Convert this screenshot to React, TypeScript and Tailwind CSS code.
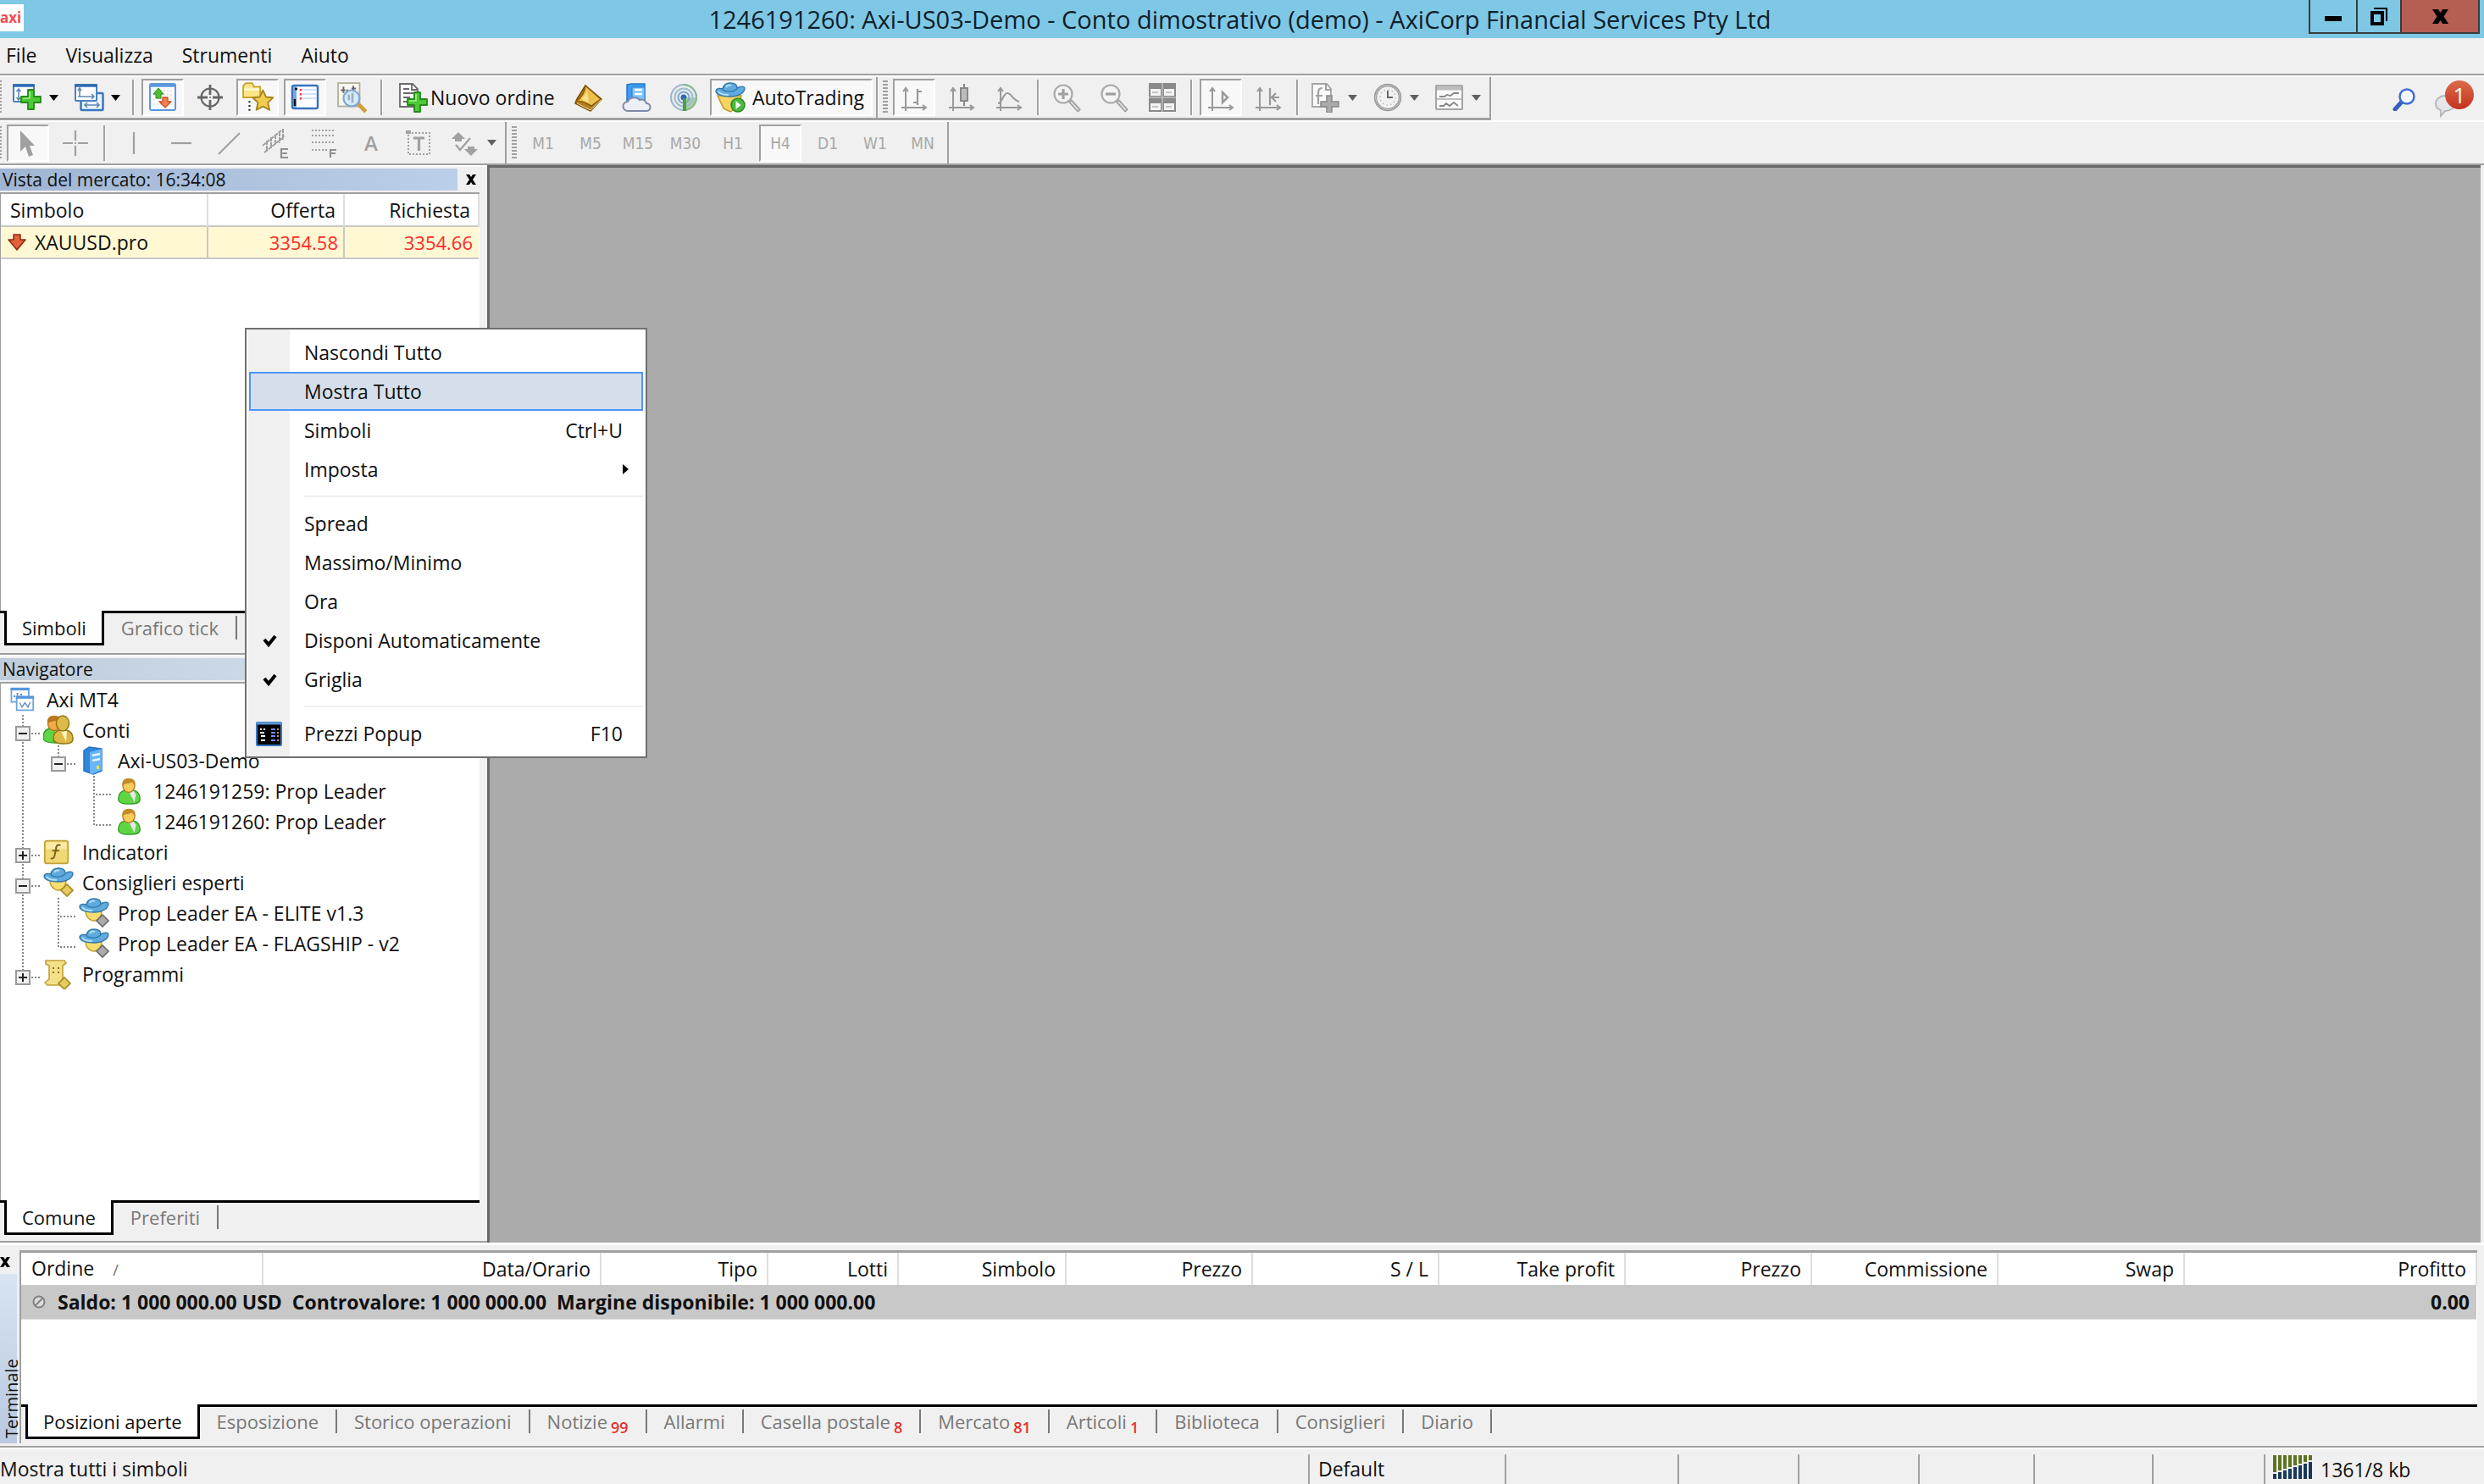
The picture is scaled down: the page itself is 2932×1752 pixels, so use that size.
import React, { useState } from 'react';

type IconProps = { size?: number; children: React.ReactNode };

function Icon({ size = 36, children }: IconProps) {
  return (
    <svg width={size} height={size} viewBox="0 0 36 36" fill="none" className="shrink-0" aria-hidden="true">
      {children}
    </svg>
  );
}

/* Toolbar icons */

function GreenPlus() {
  return (
    <>
      <path
        d="M19 9h7v8h8v7h-8v8h-7v-8h-8v-7h8z"
        fill="#4cc934"
        stroke="#238a1a"
        strokeWidth="1.8"
        strokeLinejoin="round"
      />
      <path d="M21 11v8h-8" stroke="#a5f08c" strokeWidth="1.6" />
    </>
  );
}

function NewChartIcon() {
  return (
    <Icon>
      <rect x="2" y="3" width="24" height="20" rx="1" fill="#fff" stroke="#4a80c0" strokeWidth="2" />
      <path d="M1 4h26" stroke="#2f6cb5" strokeWidth="3.5" />
      <path d="M8 9v11M5.5 11L8 8l2.5 3M5.5 18L8 21l2.5-3" stroke="#5f88b4" strokeWidth="1.6" />
      <GreenPlus />
    </Icon>
  );
}

function ProfilesIcon() {
  return (
    <Icon>
      <rect x="8.5" y="13" width="26" height="20" rx="1" fill="#eaf3fc" stroke="#3b76bd" strokeWidth="2.5" />
      <path d="M13 27h17M16 24l-3 3 3 3M27 24l3 3-3 3" stroke="#5f88b4" strokeWidth="1.6" />
      <rect x="2" y="3" width="25" height="19" rx="1" fill="#fff" stroke="#4a80c0" strokeWidth="2" />
      <path d="M1 4h27" stroke="#2f6cb5" strokeWidth="3.5" />
      <path d="M7 8v9M5 10l2-3 2 3M5 17h19M21 14l3 3-3 3" stroke="#5f88b4" strokeWidth="1.6" />
    </Icon>
  );
}

function MarketWatchIcon() {
  return (
    <Icon>
      <rect x="3" y="2" width="30" height="31" rx="2" fill="#fff" stroke="#5b98dc" strokeWidth="2" />
      <path d="M3 4h30" stroke="#5b98dc" strokeWidth="3.5" />
      <path d="M7 10h22M7 15h22M7 20h22M7 26h22" stroke="#dcdcdc" strokeWidth="1.5" strokeDasharray="2 2" />
      <path d="M13 7l6 7h-3v5h-6v-5H7z" fill="#4fbf38" stroke="#2a8a18" />
      <path d="M21 30l7-7h-4v-5h-6v5h-4z" fill="#f58055" stroke="#cc4f20" strokeWidth="1.3" />
    </Icon>
  );
}

function CrosshairIcon() {
  return (
    <Icon>
      <circle cx="18" cy="18" r="10.500" stroke="#666" strokeWidth="2.200" />
      <path d="M18 3v12M18 21v12M3 18h12M21 18h12" stroke="#666" strokeWidth="2.800" />
      <path d="M17 18h2" stroke="#888" strokeWidth="2" />
    </Icon>
  );
}

function NavigatorIcon() {
  return (
    <Icon size={38}>
      <path d="M2 18V5l3-3h7l2 4h7v12z" fill="#fbe588" stroke="#c7a22e" strokeWidth="1.8" />
      <path d="M3 9h17" stroke="#fffbe0" strokeWidth="2" />
      <path d="M9 22v12" stroke="#222" strokeWidth="2" strokeDasharray="2 2.500" />
      <path
        d="M24 10l3.500 7.500 8 .8-6 5.500 1.800 8.200-7.300-4-7.300 4 1.800-8.200-6-5.500 8-.8z"
        fill="#f0cf50"
        stroke="#a8821e"
        strokeWidth="1.800"
        strokeLinejoin="round"
      />
    </Icon>
  );
}

function TerminalIcon() {
  return (
    <Icon>
      <rect x="3" y="4" width="30" height="27" rx="2" fill="#fff" stroke="#3a74bc" strokeWidth="2.500" />
      <path d="M4 5h4v25H4z" fill="#7aa7dd" />
      <path d="M15 9h16M15 14h16M15 19h16" stroke="#c4daf5" strokeWidth="1.600" />
      <path d="M6 8h3M6 20v8" stroke="#111" strokeWidth="2.500" />
      <path d="M13 8v14" stroke="#e04050" strokeWidth="2.400" strokeDasharray="2.400 2.600" />
    </Icon>
  );
}

function TesterIcon() {
  return (
    <Icon size={38}>
      <rect x="2" y="2" width="24" height="26" fill="#f9f7f1" stroke="#b5b09c" strokeWidth="1.800" />
      <path d="M8 6v7M12 9v6M19 5v7M5 10h5M17 8h5" stroke="#666" strokeWidth="1.800" />
      <path d="M24 25l9 9" stroke="#cf9f3c" strokeWidth="4.500" />
      <circle cx="17" cy="19" r="9" fill="#d3e8fb" fillOpacity="0.9" stroke="#7ba6d4" strokeWidth="2" />
      <path d="M14 15v6M18 13v11" stroke="#9db1c4" strokeWidth="2.500" />
    </Icon>
  );
}

function NewOrderIcon() {
  return (
    <Icon>
      <path d="M2 2h15l6 6v21H2z" fill="#fff" stroke="#6a6a6a" strokeWidth="1.800" />
      <path d="M16 2v7h7" stroke="#6a6a6a" strokeWidth="1.800" />
      <path d="M6 8h7M6 13h12M6 18h8M6 23h7" stroke="#6a6a6a" strokeWidth="1.800" />
      <g transform="translate(0 3)">
        <GreenPlus />
      </g>
    </Icon>
  );
}

function BookIcon() {
  return (
    <Icon>
      <path d="M14 4L33 20 20 34 2 25l2-5z" fill="#b57e1c" stroke="#7a4c08" strokeWidth="1.600" strokeLinejoin="round" />
      <path d="M14 4l18 16-11 8C14 24 8 22 3 22c6-3 10-9 11-18z" fill="#ecc04a" stroke="#8b5a0c" strokeWidth="1.500" />
      <path d="M16 9c-1 5-4 8-7 11l9 4z" fill="#fdf0a8" opacity="0.7" />
      <path d="M4 25l16 8 12-12" stroke="#f2dc9c" />
    </Icon>
  );
}

function CloudIcon() {
  return (
    <Icon>
      <path d="M7 3l5-1h16v22H7z" fill="#3f9bf0" stroke="#2477cc" strokeWidth="1.500" />
      <path d="M13 6h15v18H13z" fill="#7cc4ff" stroke="#2a7cd4" />
      <path d="M16 9h9M16 14h9" stroke="#fff" strokeWidth="2.500" />
      <path
        d="M8 34a5.500 5.500 0 010-11 8 7 0 0114-2 6 6 0 018 4 4.500 4.500 0 010 9z"
        fill="#eceff6"
        stroke="#7c88a8"
        strokeWidth="2"
      />
    </Icon>
  );
}

function SignalIcon() {
  return (
    <Icon>
      <circle cx="18" cy="18" r="15" fill="#e6edea" stroke="#9ab3cf" strokeWidth="2" />
      <path d="M18 18h15A15 15 0 0118 34z" fill="#a5cfa0" />
      <path d="M18 3a15 15 0 010 30" stroke="#8ab790" strokeWidth="2" />
      <circle cx="18" cy="18" r="10.500" stroke="#a3bcd6" strokeWidth="2" />
      <circle cx="18" cy="18" r="6.500" stroke="#82a5cf" strokeWidth="2" />
      <circle cx="18" cy="18" r="3.500" fill="#2f66b5" />
      <path d="M19 19v15" stroke="#48a33c" strokeWidth="4" />
    </Icon>
  );
}

function ExpertHat() {
  return (
    <>
      <path
        d="M1 10c1-3 5-3 8-2 1-5 4-7 9-7s8 2 8 6c4-2 8-3 9 0 0 6-8 10-17 10S1 15 1 10z"
        fill="#5fabdf"
        stroke="#2f77a8"
        strokeWidth="1.400"
      />
      <path d="M9 9c4 3 12 3 17-1" stroke="#2f77a8" strokeWidth="1.400" />
      <path d="M13 6c1-2 3-3 6-2M4 11c2 3 8 4 12 4" stroke="#b4def8" strokeWidth="2" />
    </>
  );
}

function AutoTradingIcon() {
  return (
    <Icon>
      <path d="M3 16h28l-4 13-9 6-8-4z" fill="#f5d460" stroke="#c09828" strokeWidth="1.500" />
      <ExpertHat />
      <circle cx="27" cy="27" r="8" fill="#4cb83e" stroke="#2b8a24" strokeWidth="1.500" />
      <path d="M24.500 22v10l6-5z" fill="#fff" />
    </Icon>
  );
}

function Axes() {
  return <path d="M8 34V8M5 11l3-4 3 4M3 30h29M28 27l4 3-4 3" stroke="#999" strokeWidth="2" />;
}

function BarChartIcon() {
  return (
    <Icon>
      <Axes />
      <path d="M22 8v19M22 11h5M17 24h5" stroke="#999" strokeWidth="2.200" />
    </Icon>
  );
}

function CandlesIcon() {
  return (
    <Icon>
      <Axes />
      <path d="M21 2v26" stroke="#888" strokeWidth="2" />
      <rect x="17" y="7" width="8" height="15" fill="#bcbcbc" stroke="#888" strokeWidth="2" />
    </Icon>
  );
}

function LineChartIcon() {
  return (
    <Icon>
      <Axes />
      <path d="M5 25c5 0 6-12 11-12s6 8 14 10" stroke="#999" strokeWidth="2" />
    </Icon>
  );
}

function ZoomIcon({ plus }: { plus?: boolean }) {
  return (
    <Icon>
      <path d="M21 22l11 12" stroke="#999" strokeWidth="5" />
      <path d="M22 23l9 10" stroke="#dcdcdc" strokeWidth="2" />
      <circle cx="13" cy="14" r="10.500" fill="#f4f4f4" stroke="#aaa" strokeWidth="2.200" />
      <path d={plus ? 'M7 14h12M13 8v12' : 'M7 14h12'} stroke="#a0a0a0" strokeWidth="3.200" />
    </Icon>
  );
}

function TileIcon() {
  return (
    <Icon>
      <path d="M2 1h32v34H2z" fill="#8a8a8a" />
      <path d="M4 8h12v8H4zM20 8h12v8H20zM4 25h12v8H4zM20 25h12v8H20z" fill="#f4f4f4" />
      <path d="M18 1v34M2 18h32" stroke="#c0c0c0" strokeWidth="1.500" />
      <path d="M6 12h7M22 12h7M6 29h7M22 29h7" stroke="#c4c4c4" strokeWidth="2" />
    </Icon>
  );
}

function ScrollIcon() {
  return (
    <Icon>
      <Axes />
      <path d="M20 12v12l6-6z" stroke="#999" strokeWidth="2.500" />
    </Icon>
  );
}

function ShiftIcon() {
  return (
    <Icon>
      <Axes />
      <path d="M20 7v20M31 18h-9M27 13l-5 5 5 5" stroke="#999" strokeWidth="2.200" />
    </Icon>
  );
}

function IndicatorsIcon() {
  return (
    <Icon>
      <path d="M2 2h17l5 6v21H2z" fill="#fafafa" stroke="#a5a5a5" strokeWidth="1.800" />
      <path d="M18 2v7h6M9 26V12c0-4 2-5 5-5M6 16h8" stroke="#a0a0a0" strokeWidth="2.200" />
      <path d="M19 16h6v7h8v6h-8v7h-6v-7h-7v-6h7z" fill="#ababab" stroke="#888" strokeWidth="1.500" />
    </Icon>
  );
}

function ClockIcon() {
  return (
    <Icon>
      <circle cx="18" cy="18" r="14.500" fill="#f2f2f2" stroke="#999" strokeWidth="3.500" />
      <circle cx="18" cy="18" r="14.500" stroke="#c8c8c8" />
      <path d="M18 10v8h6" stroke="#666" strokeWidth="2" />
      <circle cx="18" cy="18" r="9" stroke="#b5b5b5" strokeWidth="1.500" strokeDasharray="1.500 3.200" />
    </Icon>
  );
}

function TemplatesIcon() {
  return (
    <Icon>
      <rect x="2" y="4" width="31" height="28" rx="1" fill="#fafafa" stroke="#a5a5a5" strokeWidth="2" />
      <path d="M3 7h29" stroke="#bcbcbc" strokeWidth="5" />
      <path d="M3 20h29" stroke="#aaa" strokeWidth="1.500" />
      <path d="M6 17h6l3-2 4 1 4-3h6M6 28h5l3-3 4 3 5-4 5 4" stroke="#888" strokeWidth="1.800" />
    </Icon>
  );
}

/* Line tools */

function CursorIcon() {
  return (
    <Icon>
      <path d="M9 3v25l6-6 4 12 5-2-4-11h6z" fill="#a0a0a0" />
    </Icon>
  );
}

function CrossIcon() {
  return (
    <Icon>
      <path d="M18 3v12M18 21v12M3 18h12M21 18h12M17 18h2" stroke="#a0a0a0" strokeWidth="2.200" />
    </Icon>
  );
}

function VLineIcon() {
  return (
    <Icon>
      <path d="M18 5v26" stroke="#a0a0a0" strokeWidth="2.200" />
    </Icon>
  );
}

function HLineIcon() {
  return (
    <Icon>
      <path d="M6 18h24" stroke="#a0a0a0" strokeWidth="2.200" />
    </Icon>
  );
}

function TrendIcon() {
  return (
    <Icon>
      <path d="M6 31L31 6" stroke="#a0a0a0" strokeWidth="2.200" />
    </Icon>
  );
}

function ChannelIcon() {
  return (
    <Icon>
      <path
        d="M2 21L24 3M4 29L28 10M7 15v13M12 11v13M17 8v12M22 5v13M26 1v13"
        stroke="#a0a0a0"
        strokeWidth="2"
        strokeDasharray="5 1"
      />
      <path d="M32 25h-8v10h8M24 30h7" stroke="#909090" strokeWidth="2.200" />
    </Icon>
  );
}

function FiboIcon() {
  return (
    <Icon>
      <path d="M4 3h28M4 9h28M4 17h28M4 26h18" stroke="#a0a0a0" strokeWidth="2.200" strokeDasharray="2 2" />
      <path d="M33 26h-7v9M26 30h6" stroke="#909090" strokeWidth="2.200" />
    </Icon>
  );
}

function LabelIcon() {
  return (
    <Icon>
      <path d="M6 6h25v25H6z" stroke="#a0a0a0" strokeWidth="2" strokeDasharray="2 2" />
      <path d="M3 3h6v4H3z" fill="#a0a0a0" />
      <path d="M12 12h13M18.500 12v15" stroke="#a0a0a0" strokeWidth="3.200" />
    </Icon>
  );
}

function ArrowsIcon() {
  return (
    <Icon>
      <path d="M10 5l8 8h-4v3H6v-3H2zM25 33l8-8h-4v-3h-8v3h-4z" fill="#a0a0a0" />
      <path d="M7 20l5 6 12-14" stroke="#a0a0a0" strokeWidth="2.200" />
    </Icon>
  );
}

/* Navigator icons */

function ChartsIcon() {
  return (
    <Icon size={32}>
      <rect x="5" y="3" width="23" height="18" fill="#fff" stroke="#6aa3dc" strokeWidth="2" />
      <path d="M4 4h25" stroke="#5596da" strokeWidth="3.500" />
      <path d="M9 12v3M13 9v4M18 10v3" stroke="#5a82c8" strokeWidth="2" />
      <rect x="12" y="14" width="22" height="18" fill="#fff" stroke="#6aa3dc" strokeWidth="2" />
      <path d="M11 15h24" stroke="#5596da" strokeWidth="3.500" />
      <path d="M16 22l3 6 4-6 4 6 3-7" stroke="#6a8cd0" strokeWidth="1.600" />
    </Icon>
  );
}

function Person({ hair, body, face }: { hair: string; body: string; face: string }) {
  return (
    <>
      <path
        d="M5 28c0-6 3-10 8-11h11c5 1 8 5 8 11 0 5-5 6-13 6S5 33 5 28z"
        fill={body}
        stroke="#2f9a24"
        strokeWidth="1.400"
      />
      <path d="M18 18h6l3 4-2 10z" fill="#e6e6ee" />
      <ellipse cx="18" cy="11" rx="7.500" ry="8.500" fill={face} stroke="#b07a20" strokeWidth="1.400" />
      <path d="M10 11C9 3 14 2 18 2s9 1 8 9c-2-1-3-3-4-4-3 2-8 1-12 4z" fill={hair} />
    </>
  );
}

function AccountIcon() {
  return (
    <Icon size={34}>
      <Person hair="#c28a28" body="#5ed644" face="#fbcb5c" />
    </Icon>
  );
}

function AccountsIcon() {
  return (
    <Icon size={36}>
      <g transform="translate(-5 -1)">
        <Person hair="#b9781e" body="#5ed644" face="#f5a94a" />
      </g>
      <path
        d="M12 28c0-6 3-9 7-10h8c5 1 8 4 8 10 0 5-4 6-11 6s-12-1-12-6z"
        fill="#dcb944"
        stroke="#947416"
        strokeWidth="1.500"
      />
      <path d="M21 19l7 0-1 13z" fill="#fff3c8" />
      <ellipse cx="23" cy="10" rx="7.500" ry="9" fill="#dcbb48" stroke="#947416" strokeWidth="1.500" />
    </Icon>
  );
}

function ServerIcon() {
  return (
    <Icon size={36}>
      <path d="M6 6l6-4 15 2v26l-10 4-11-4z" fill="#2f86dc" stroke="#2a73c4" strokeWidth="1.500" strokeLinejoin="round" />
      <path d="M13 8l14-4v25l-11 5-3-1z" fill="#68b6f8" />
      <path d="M16 12l9-2M16 18l9-2" stroke="#e4f4ff" strokeWidth="2.500" />
      <path d="M21 24h3v4h-3z" fill="#ffe04a" />
    </Icon>
  );
}

function FunctionIcon() {
  return (
    <Icon size={32}>
      <rect x="2" y="3" width="31" height="30" rx="3" fill="#f0d872" stroke="#c4a23a" strokeWidth="2" />
      <path d="M4 5h27v9H4z" fill="#fbf0b4" opacity="0.8" />
      <path d="M23 9c-4-2-6 1-6 5l-2 9c-1 4-3 4-5 3M12 16h9" stroke="#7a6220" strokeWidth="2.200" />
    </Icon>
  );
}

function ExpertIcon({ off }: { off?: boolean }) {
  return (
    <Icon size={36}>
      <path d="M8 16h19c0 6-4 11-9 11s-10-5-10-11z" fill="#f8de70" stroke="#c29c30" strokeWidth="1.400" />
      <ExpertHat />
      <path
        d="M28 20l7 7-7 7-7-7z"
        fill={off ? '#ababab' : '#e6cc60'}
        stroke={off ? '#6c6c6c' : '#a58820'}
        strokeWidth="1.600"
      />
    </Icon>
  );
}

function ScriptIcon() {
  return (
    <Icon size={36}>
      <path
        d="M3 2h22l2 3-4 3v15l3 3-4 5H5l-3-3 5-4V8L3 6z"
        fill="#f4e088"
        stroke="#c0a03a"
        strokeWidth="1.600"
        strokeLinejoin="round"
      />
      <path d="M11 11h2M17 11h2M11 16h2M17 16h2" stroke="#8c7220" strokeWidth="2" />
      <path d="M25 22l7 7-7 7-7-7z" fill="#e6cc60" stroke="#a58820" strokeWidth="1.600" />
    </Icon>
  );
}

function PopupPricesIcon() {
  return (
    <svg width="31" height="29" viewBox="0 0 31 29" className="shrink-0" aria-hidden="true">
      <rect x="1" y="1" width="29" height="27" rx="1" fill="#000" stroke="#3a78c0" strokeWidth="2" />
      <path d="M1 2h29" stroke="#5b97d8" strokeWidth="3" />
      <path d="M5 9h2M9 9h2M5 13h5M6 17h5M6 22h5" stroke="#fff" strokeWidth="2" />
      <path d="M18 9h5M18 13h5M18 17h5M18 22h5" stroke="#7c86ff" strokeWidth="2" />
      <path d="M25 9h2M25 13h2M25 17h2M25 22h2" stroke="#f08060" strokeWidth="2" />
    </svg>
  );
}

function Cross() {
  return (
    <svg width="12" height="12" viewBox="0 0 12 12" className="shrink-0" aria-hidden="true">
      <path d="M0 0h4l2 3 2-3h4L8 6l4 6H8L6 9l-2 3H0l4-6z" fill="#000" />
    </svg>
  );
}

function Caret() {
  return (
    <svg width="11" height="7" viewBox="0 0 11 7" className="shrink-0" aria-hidden="true">
      <path d="M0 0h11L5.500 7z" fill="currentColor" />
    </svg>
  );
}

/* Toolbar parts */

function Grip() {
  return (
    <div className="h-[40px] w-[6px] shrink-0 bg-[repeating-linear-gradient(to_bottom,#a0a0a0_0_2px,#f0f0f0_2px_4px)]" />
  );
}

function Divider() {
  return <div className="mx-[2px] h-[42px] w-[3px] shrink-0 border-r border-l-2 border-r-white border-l-[#a0a0a0]" />;
}

const pressedStyle = 'border-t-[#a0a0a0] border-l-[#a0a0a0] border-r-white border-b-white bg-[#f8f8f8]';

type ToolProps = { label: string; pressed?: boolean; children: React.ReactNode };

function Tool({ label, pressed, children }: ToolProps) {
  return (
    <button
      type="button"
      aria-label={label}
      className={`flex h-[44px] w-[50px] shrink-0 items-center justify-center border-2 ${pressed ? pressedStyle : 'border-transparent'}`}
    >
      {children}
    </button>
  );
}

function DropTool({ label, dark, children }: { label: string; dark?: boolean; children: React.ReactNode }) {
  return (
    <button
      type="button"
      aria-label={label}
      className={`flex h-[44px] w-[67px] shrink-0 items-center justify-center gap-2 ${dark ? 'text-black' : 'text-[#606060]'}`}
    >
      {children}
      <Caret />
    </button>
  );
}

function TitleBar() {
  return (
    <header className="grid h-[45px] shrink-0 grid-cols-[1fr_auto_1fr] items-start bg-[#7ec8e6] pr-[5px]">
      <div className="mt-[5px] flex h-[32px] w-[28px] items-center overflow-hidden bg-white text-[17px] font-bold text-[#f04a55]">
        axi
      </div>
      <h1 className="text-[29px] leading-[46px] text-[#10202a]">
        1246191260: Axi-US03-Demo - Conto dimostrativo (demo) - AxiCorp Financial Services Pty Ltd
      </h1>
      <div className="flex h-[40px] justify-self-end border-x-2 border-b-2 border-[#3c3c3c]">
        <button
          type="button"
          aria-label="Riduci a icona"
          className="flex w-[56px] items-center justify-center border-r-2 border-[#3c3c3c] pt-[6px]"
        >
          <span className="h-[6px] w-[20px] bg-black" />
        </button>
        <button
          type="button"
          aria-label="Ripristina"
          className="flex w-[52px] items-center justify-center border-r-2 border-[#3c3c3c]"
        >
          <svg width="22" height="22" viewBox="0 0 22 22" fill="none" aria-hidden="true">
            <rect x="3" y="7" width="12" height="13" stroke="#000" strokeWidth="4" />
            <path d="M5 2h15v15" stroke="#000" strokeWidth="2" />
          </svg>
        </button>
        <button type="button" aria-label="Chiudi" className="flex w-[90px] items-center justify-center bg-[#b55e52]">
          <svg width="19" height="17" viewBox="0 0 19 17" aria-hidden="true">
            <path d="M0 0h7l2.500 4L12 0h7l-5.500 8.500L19 17h-7l-2.500-4L7 17H0l5.500-8.500z" fill="#000" />
          </svg>
        </button>
      </div>
    </header>
  );
}

function MenuBar() {
  return (
    <nav className="flex h-[44px] shrink-0 items-center gap-[34px] border-b-2 border-[#a0a0a0] pb-[3px] pl-[7px]">
      {['File', 'Visualizza', 'Strumenti', 'Aiuto'].map((item) => (
        <button key={item} type="button">
          {item}
        </button>
      ))}
    </nav>
  );
}

function MainToolbar() {
  return (
    <div className="flex h-[53px] shrink-0 items-stretch justify-between border-t-2 border-white">
      <div className="flex items-stretch">
        <div className="flex items-center gap-[6px] border-r-2 border-b-[3px] border-[#a0a0a0] pr-1">
          <div className="h-[40px] w-[2px] bg-[repeating-linear-gradient(to_bottom,#a0a0a0_0_2px,#f0f0f0_2px_4px)]" />
          <DropTool label="Nuovo grafico" dark>
            <NewChartIcon />
          </DropTool>
          <DropTool label="Profili" dark>
            <ProfilesIcon />
          </DropTool>
          <Divider />
          <Tool label="Vista del mercato" pressed>
            <MarketWatchIcon />
          </Tool>
          <Tool label="Finestra dati">
            <CrosshairIcon />
          </Tool>
          <Tool label="Navigatore" pressed>
            <NavigatorIcon />
          </Tool>
          <Tool label="Terminale" pressed>
            <TerminalIcon />
          </Tool>
          <Tool label="Tester strategia">
            <TesterIcon />
          </Tool>
          <Divider />
          <button
            type="button"
            className="flex h-[44px] w-[204px] shrink-0 items-center gap-[2px] pl-[10px] whitespace-nowrap"
          >
            <NewOrderIcon />
            Nuovo ordine
          </button>
          <Tool label="MetaEditor">
            <BookIcon />
          </Tool>
          <Tool label="Cloud">
            <CloudIcon />
          </Tool>
          <Tool label="Segnali">
            <SignalIcon />
          </Tool>
          <button
            type="button"
            className={`flex h-[44px] w-[192px] shrink-0 items-center gap-2 border-2 pl-1 whitespace-nowrap ${pressedStyle}`}
          >
            <AutoTradingIcon />
            AutoTrading
          </button>
        </div>
        <div className="flex items-center gap-[6px] border-r-2 border-b-[3px] border-[#a0a0a0] pr-1 pl-[6px]">
          <Grip />
          <Tool label="Grafico a barre" pressed>
            <BarChartIcon />
          </Tool>
          <Tool label="Grafico a candele">
            <CandlesIcon />
          </Tool>
          <Tool label="Grafico a linea">
            <LineChartIcon />
          </Tool>
          <Divider />
          <Tool label="Ingrandisci">
            <ZoomIcon plus />
          </Tool>
          <Tool label="Riduci">
            <ZoomIcon />
          </Tool>
          <Tool label="Affianca">
            <TileIcon />
          </Tool>
          <Divider />
          <Tool label="Scorrimento automatico" pressed>
            <ScrollIcon />
          </Tool>
          <Tool label="Spostamento grafico">
            <ShiftIcon />
          </Tool>
          <Divider />
          <DropTool label="Indicatori">
            <IndicatorsIcon />
          </DropTool>
          <DropTool label="Periodi">
            <ClockIcon />
          </DropTool>
          <DropTool label="Modelli">
            <TemplatesIcon />
          </DropTool>
        </div>
      </div>
      <div className="flex items-center gap-[20px] pr-[12px]">
        <button type="button" aria-label="Cerca">
          <svg width="28" height="28" viewBox="0 0 28 28" fill="none" aria-hidden="true">
            <path d="M12 16L3 26" stroke="#3560bd" strokeWidth="5" strokeLinecap="round" />
            <circle cx="17" cy="11" r="8.500" fill="#f5f8ff" stroke="#3f6ed2" strokeWidth="2.500" />
          </svg>
        </button>
        <button type="button" aria-label="Notifiche" className="relative h-[44px] w-[48px]">
          <svg
            width="34"
            height="34"
            viewBox="0 0 34 34"
            fill="none"
            className="absolute bottom-0 left-0"
            aria-hidden="true"
          >
            <path
              d="M14 8c8 0 12 4 12 9s-5 9-12 9l-5 6v-7c-4-1-6-4-6-8 0-5 5-9 11-9z"
              fill="#e6e6ea"
              stroke="#b4b4b8"
              strokeWidth="1.800"
            />
          </svg>
          <span className="absolute top-0 right-0 flex h-[34px] w-[34px] items-center justify-center rounded-full bg-linear-to-b from-[#dc6a4a] to-[#c4301c] text-[26px] text-white">
            1
          </span>
        </button>
      </div>
    </div>
  );
}

const timeframes = ['M1', 'M5', 'M15', 'M30', 'H1', 'H4', 'D1', 'W1', 'MN'];

function DrawingToolbar() {
  const [frame, setFrame] = useState('H4');

  return (
    <div className="flex h-[53px] shrink-0 items-stretch border-t-2 border-b-2 border-t-white border-b-[#a0a0a0]">
      <div className="flex items-center gap-[6px] border-r-2 border-[#a0a0a0] pr-1">
        <div className="h-[40px] w-[2px] bg-[repeating-linear-gradient(to_bottom,#a0a0a0_0_2px,#f0f0f0_2px_4px)]" />
        <Tool label="Cursore" pressed>
          <CursorIcon />
        </Tool>
        <Tool label="Mirino">
          <CrossIcon />
        </Tool>
        <Divider />
        <Tool label="Linea verticale">
          <VLineIcon />
        </Tool>
        <Tool label="Linea orizzontale">
          <HLineIcon />
        </Tool>
        <Tool label="Trendline">
          <TrendIcon />
        </Tool>
        <Tool label="Canale equidistante">
          <ChannelIcon />
        </Tool>
        <Tool label="Fibonacci">
          <FiboIcon />
        </Tool>
        <Tool label="Testo">
          <span className="text-[24px] font-semibold text-[#a0a0a0]">A</span>
        </Tool>
        <Tool label="Etichetta">
          <LabelIcon />
        </Tool>
        <DropTool label="Frecce">
          <ArrowsIcon />
        </DropTool>
      </div>
      <div className="flex items-center gap-[6px] border-r-2 border-[#a0a0a0] pr-1 pl-[6px]">
        <Grip />
        {timeframes.map((tf) => (
          <button
            key={tf}
            type="button"
            onClick={() => setFrame(tf)}
            className={`h-[44px] w-[50px] shrink-0 border-2 font-['DejaVu_Sans_Condensed','DejaVu_Sans',sans-serif] text-[19px] text-[#a8a8a8] ${tf === frame ? pressedStyle : 'border-transparent'}`}
          >
            {tf}
          </button>
        ))}
      </div>
    </div>
  );
}

type Tab = { name: string; badge?: number };

function TabStrip({ tabs, height }: { tabs: Tab[]; height: string }) {
  const [active, setActive] = useState(tabs[0].name);

  return (
    <div className={`flex shrink-0 items-start bg-[#f0f0f0] text-[22px] ${height}`}>
      <div className="w-[5px] border-t-[3px] border-black" />
      {tabs.map((tab) =>
        tab.name === active ? (
          <button
            key={tab.name}
            type="button"
            className="h-[41px] border-x-[3px] border-b-[3px] border-black bg-white px-[18px] pt-[2px]"
          >
            {tab.name}
          </button>
        ) : (
          <button
            key={tab.name}
            type="button"
            onClick={() => setActive(tab.name)}
            className="flex h-[41px] items-center border-t-[3px] border-black pb-[4px] text-[#787878]"
          >
            <span className="border-r-2 border-[#787878] px-[20px] leading-[28px]">
              {tab.name}
              {tab.badge && (
                <sub className="ml-[4px] text-[18px] leading-none font-semibold text-[#e83030]">{tab.badge}</sub>
              )}
            </span>
          </button>
        ),
      )}
      <div className="flex-1 border-t-[3px] border-black" />
    </div>
  );
}

function MarketWatch() {
  return (
    <section className="flex h-[576px] shrink-0 flex-col border-b-2 border-[#a0a0a0]">
      <div className="mt-[2px] flex h-[26px] shrink-0 items-center justify-between pr-[13px]">
        <h2 className="w-[540px] bg-linear-to-r from-[#9fb5d3] to-[#bccfe8] pl-[3px] text-[21px] leading-[26px]">
          Vista del mercato: 16:34:08
        </h2>
        <button type="button" aria-label="Chiudi vista del mercato">
          <Cross />
        </button>
      </div>
      <div className="mt-[2px] mr-[9px] flex-1 border-t-2 border-l border-[#a0a0a0] bg-white">
        <table className="w-full table-fixed border-collapse">
          <colgroup>
            <col className="w-[244px]" />
            <col className="w-[161px]" />
            <col />
          </colgroup>
          <thead>
            <tr className="h-[38px] border-b-2 border-[#c8c8c8]">
              <th className="border-r-2 border-[#dedede] pl-[11px] text-left font-normal">Simbolo</th>
              <th className="border-r-2 border-[#dedede] pr-[9px] text-right font-normal">Offerta</th>
              <th className="border-r-2 border-[#dedede] pr-[9px] text-right font-normal">Richiesta</th>
            </tr>
          </thead>
          <tbody>
            <tr className="h-[38px] border-b-2 border-[#c8c8c8] bg-[#fff8d2]">
              <td className="border-r-2 border-[#c8c8c8] pl-2">
                <span className="flex items-center gap-[10px]">
                  <svg width="22" height="20" viewBox="0 0 22 20" aria-hidden="true">
                    <path
                      d="M7 1h8v6h6L11 19 1 7h6z"
                      fill="#e2603a"
                      stroke="#8e2a10"
                      strokeWidth="1.500"
                      strokeLinejoin="round"
                    />
                  </svg>
                  XAUUSD.pro
                </span>
              </td>
              <td className="border-r-2 border-[#c8c8c8] pr-[6px] text-right text-[22px] text-[#ff2a2a]">3354.58</td>
              <td className="pr-[7px] text-right text-[22px] text-[#ff2a2a]">3354.66</td>
            </tr>
          </tbody>
        </table>
      </div>
      <div className="mr-[9px]">
        <TabStrip tabs={[{ name: 'Simboli' }, { name: 'Grafico tick' }]} height="h-[50px]" />
      </div>
    </section>
  );
}

type Branch = 'line' | 'tee' | 'end' | 'minus' | 'plus' | 'minusEnd' | 'plusEnd' | 'blank';

// One 42px cell of the tree's dotted connectors, with its expander box.
function BranchCell({ kind }: { kind: Branch }) {
  const boxed = kind.startsWith('minus') || kind.startsWith('plus');
  const last = kind === 'end' || kind.endsWith('End');
  return (
    <svg width="42" height="36" viewBox="0 0 42 36" fill="none" className="shrink-0" aria-hidden="true">
      {kind !== 'blank' && (
        <path d={last ? 'M21 0v22' : 'M21 0v36'} stroke="#888" strokeWidth="2" strokeDasharray="2 2" />
      )}
      {kind !== 'blank' && kind !== 'line' && (
        <path d="M23 22h20" stroke="#888" strokeWidth="2" strokeDasharray="2 2" />
      )}
      {boxed && (
        <>
          <rect x="13" y="14" width="16" height="16" fill="#f0f0f0" stroke="#999" strokeWidth="2" />
          <path d={kind.startsWith('plus') ? 'M16 22h10M21 17v10' : 'M16 22h10'} stroke="#222" strokeWidth="2" />
        </>
      )}
    </svg>
  );
}

const tree: { label: string; icon: React.ReactNode; cells: Branch[] }[] = [
  { label: 'Axi MT4', icon: <ChartsIcon />, cells: [] },
  { label: 'Conti', icon: <AccountsIcon />, cells: ['minus'] },
  { label: 'Axi-US03-Demo', icon: <ServerIcon />, cells: ['line', 'minusEnd'] },
  { label: '1246191259: Prop Leader', icon: <AccountIcon />, cells: ['line', 'blank', 'tee'] },
  { label: '1246191260: Prop Leader', icon: <AccountIcon />, cells: ['line', 'blank', 'end'] },
  { label: 'Indicatori', icon: <FunctionIcon />, cells: ['plus'] },
  { label: 'Consiglieri esperti', icon: <ExpertIcon />, cells: ['minus'] },
  { label: 'Prop Leader EA - ELITE v1.3', icon: <ExpertIcon off />, cells: ['line', 'tee'] },
  { label: 'Prop Leader EA - FLAGSHIP - v2', icon: <ExpertIcon off />, cells: ['line', 'end'] },
  { label: 'Programmi', icon: <ScriptIcon />, cells: ['plusEnd'] },
];

function Navigator() {
  return (
    <section className="flex flex-1 flex-col border-t-2 border-white">
      <h2 className="mt-[2px] mr-[35px] h-[26px] shrink-0 bg-linear-to-r from-[#bfcddb] to-[#d7e2ee] pl-[3px] text-[21px] leading-[26px]">
        Navigatore
      </h2>
      <ul className="mt-[2px] mr-[9px] flex-1 border-t-2 border-l border-[#a0a0a0] bg-white pt-[1px] pl-[5px]">
        {tree.map((node) => (
          <li key={node.label} className="flex h-[36px] items-center whitespace-nowrap">
            {node.cells.map((kind, i) => (
              <BranchCell key={i} kind={kind} />
            ))}
            <span className="flex w-[49px] shrink-0 pl-[3px]">{node.icon}</span>
            {node.label}
          </li>
        ))}
      </ul>
      <div className="mr-[9px]">
        <TabStrip tabs={[{ name: 'Comune' }, { name: 'Preferiti' }]} height="h-[48px]" />
      </div>
    </section>
  );
}

type MenuEntry = {
  label: string;
  keys?: string;
  checked?: boolean;
  submenu?: boolean;
  icon?: React.ReactNode;
} | null;

const menuEntries: MenuEntry[] = [
  { label: 'Nascondi Tutto' },
  { label: 'Mostra Tutto' },
  { label: 'Simboli', keys: 'Ctrl+U' },
  { label: 'Imposta', submenu: true },
  null,
  { label: 'Spread' },
  { label: 'Massimo/Minimo' },
  { label: 'Ora' },
  { label: 'Disponi Automaticamente', checked: true },
  { label: 'Griglia', checked: true },
  null,
  { label: 'Prezzi Popup', keys: 'F10', icon: <PopupPricesIcon /> },
];

function ContextMenu() {
  const [hovered, setHovered] = useState('Mostra Tutto');

  return (
    <div
      role="menu"
      className="absolute top-[192px] left-[289px] z-10 w-[475px] border-2 border-[#707070] bg-[linear-gradient(to_right,#ffffff_2px,#f0f0f0_2px_51px,#ffffff_51px)] px-[3px] py-[4px]"
    >
      {menuEntries.map((entry, i) =>
        entry === null ? (
          <div key={i} className="flex h-[18px] items-center">
            <div className="ml-[65px] h-[2px] flex-1 bg-[#efefef]" />
          </div>
        ) : (
          <button
            key={entry.label}
            type="button"
            role="menuitem"
            onMouseEnter={() => setHovered(entry.label)}
            className={`flex h-[46px] w-full items-center border-2 pr-[22px] text-left ${
              entry.label === hovered ? 'border-[#4c97ff] bg-[#d5dfec]' : 'border-transparent'
            }`}
          >
            <span className="flex w-[63px] shrink-0 pl-[6px]">
              {entry.icon}
              {entry.checked && (
                <svg width="22" height="18" viewBox="0 0 22 18" className="ml-[6px]" aria-hidden="true">
                  <path d="M4 8l5 6 8-10" fill="none" stroke="#000" strokeWidth="4" />
                </svg>
              )}
            </span>
            <span className="flex-1">{entry.label}</span>
            {entry.keys}
            {entry.submenu && (
              <svg width="7" height="12" viewBox="0 0 7 12" className="-mr-[7px]" aria-hidden="true">
                <path d="M0 0l7 6-7 6z" fill="#000" />
              </svg>
            )}
          </button>
        ),
      )}
    </div>
  );
}

const orderColumns = [
  { name: 'Data/Orario', width: 'w-[399px]' },
  { name: 'Tipo', width: 'w-[197px]' },
  { name: 'Lotti', width: 'w-[154px]' },
  { name: 'Simbolo', width: 'w-[198px]' },
  { name: 'Prezzo', width: 'w-[220px]' },
  { name: 'S / L', width: 'w-[220px]' },
  { name: 'Take profit', width: 'w-[220px]' },
  { name: 'Prezzo', width: 'w-[220px]' },
  { name: 'Commissione', width: 'w-[220px]' },
  { name: 'Swap', width: 'w-[220px]' },
  { name: 'Profitto', width: '' },
];

const terminalTabs: Tab[] = [
  { name: 'Posizioni aperte' },
  { name: 'Esposizione' },
  { name: 'Storico operazioni' },
  { name: 'Notizie', badge: 99 },
  { name: 'Allarmi' },
  { name: 'Casella postale', badge: 8 },
  { name: 'Mercato', badge: 81 },
  { name: 'Articoli', badge: 1 },
  { name: 'Biblioteca' },
  { name: 'Consiglieri' },
  { name: 'Diario' },
];

function Terminal() {
  return (
    <section className="flex h-[239px] shrink-0 border-b-2 border-[#a0a0a0] pt-[6px] pr-[8px] pb-[3px]">
      <div className="flex w-[20px] shrink-0 flex-col items-start">
        <button type="button" aria-label="Chiudi terminale" className="flex h-[28px] items-center">
          <Cross />
        </button>
        <h2 className="w-full flex-1 rotate-180 bg-linear-to-b from-[#b9c8e0] to-[#d7e4f2] pt-[6px] text-[20px] leading-[28px] [writing-mode:vertical-rl]">
          Terminale
        </h2>
      </div>
      <div className="ml-[3px] flex flex-1 flex-col border-t-[3px] border-l-2 border-[#a0a0a0] bg-white">
        <div className="flex-1">
          <table className="w-full table-fixed border-collapse">
            <colgroup>
              <col className="w-[285px]" />
              {orderColumns.map((col, i) => (
                <col key={i} className={col.width} />
              ))}
            </colgroup>
            <thead>
              <tr className="h-[38px]">
                <th className="border-r-2 border-[#dedede] pl-[12px] text-left font-normal">
                  Ordine
                  <span className="ml-[22px] text-[18px] text-[#707070]">/</span>
                </th>
                {orderColumns.map((col, i) => (
                  <th key={i} className="border-r-2 border-[#dedede] pr-[11px] text-right font-normal">
                    {col.name}
                  </th>
                ))}
              </tr>
            </thead>
            <tbody>
              <tr className="h-[40px] border-b border-[#dcdcdc] bg-[#c8c8c8] font-bold">
                <td colSpan={11} className="pl-[12px]">
                  <span className="flex items-center gap-[13px]">
                    <svg width="18" height="18" viewBox="0 0 18 18" fill="none" aria-hidden="true">
                      <circle cx="9" cy="9" r="6.500" fill="#dcdcdc" stroke="#808080" strokeWidth="2" />
                      <path d="M5 13l8-8" stroke="#808080" strokeWidth="2" />
                    </svg>
                    <span className="whitespace-pre">
                      {'Saldo: 1 000 000.00 USD  Controvalore: 1 000 000.00  Margine disponibile: 1 000 000.00'}
                    </span>
                  </span>
                </td>
                <td className="pr-[8px] text-right">0.00</td>
              </tr>
            </tbody>
          </table>
        </div>
        <TabStrip tabs={terminalTabs} height="h-[46px]" />
      </div>
    </section>
  );
}

const barHeights = [6, 8, 10, 12, 14, 16, 18, 20];

function StatusBar() {
  return (
    <footer className="flex h-[43px] shrink-0 items-stretch border-t-2 border-white pt-[6px] leading-[34px]">
      <div className="flex-1">Mostra tutti i simboli</div>
      <div className="w-[232px] border-l-2 border-[#a0a0a0] pl-[10px]">Default</div>
      <div className="w-[204px] border-l-2 border-[#a0a0a0]" />
      <div className="w-[142px] border-l-2 border-[#a0a0a0]" />
      <div className="w-[142px] border-l-2 border-[#a0a0a0]" />
      <div className="w-[136px] border-l-2 border-[#a0a0a0]" />
      <div className="w-[140px] border-l-2 border-[#a0a0a0]" />
      <div className="w-[132px] border-l-2 border-[#a0a0a0]" />
      <div className="flex w-[260px] gap-[9px] border-l-2 border-[#a0a0a0] pt-[1px] pl-[9px]">
        <svg width="47" height="28" viewBox="0 0 47 28" aria-hidden="true">
          {barHeights.map((h, i) => (
            <g key={i}>
              <rect x={i * 6} y="0" width="4" height={26 - h} fill="#5c7420" />
              <rect x={i * 6} y={28 - h} width="4" height={h} fill="#17395c" />
            </g>
          ))}
        </svg>
        1361/8 kb
      </div>
    </footer>
  );
}

export default function App() {
  return (
    <div className="flex h-screen flex-col overflow-hidden bg-[#f0f0f0] font-['Open_Sans','Noto_Sans',sans-serif] text-[23px] leading-[30px] text-[#111111]">
      <TitleBar />
      <MenuBar />
      <MainToolbar />
      <DrawingToolbar />
      <main className="relative flex min-h-0 flex-1 pr-[4px]">
        <aside className="flex w-[575px] shrink-0 flex-col border-t-2 border-b-2 border-t-white border-b-[#a0a0a0]">
          <MarketWatch />
          <Navigator />
        </aside>
        <div className="flex-1 border-t-[3px] border-l-[3px] border-[#696969] bg-[#ababab]" />
        <ContextMenu />
      </main>
      <div className="h-[3px] shrink-0 bg-white" />
      <Terminal />
      <StatusBar />
    </div>
  );
}
